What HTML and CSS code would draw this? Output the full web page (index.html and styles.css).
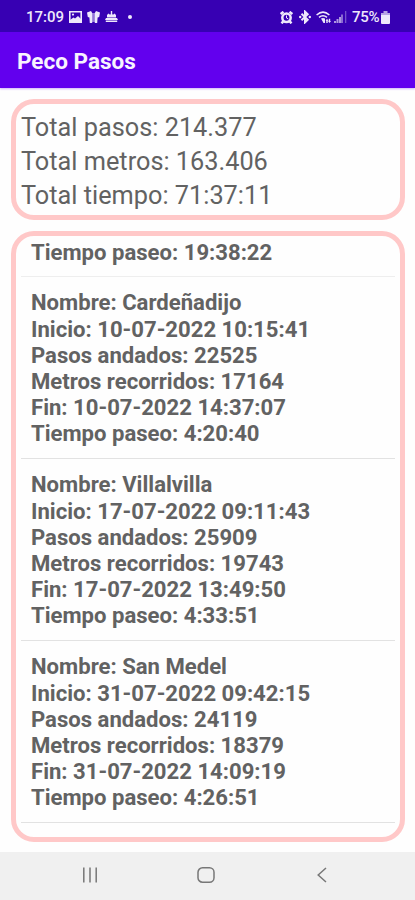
FILE: index.html
```html
<!DOCTYPE html>
<html lang="es">
<head>
    <meta charset="UTF-8">
    <meta name="viewport" content="width=device-width, initial-scale=1.0">
    <title>Peco Pasos</title>
    <link rel="stylesheet" href="styles.css">
</head>
<body>
    <div class="status-bar">
        <div class="status-left">
            <span class="clock">17:09</span>
            <svg class="icon-image" width="13" height="12" viewBox="0 0 13 12">
                <path fill="none" stroke="currentColor" stroke-width="1.6" d="M.8.8h11.4v10.4H.8z"/>
                <path fill="currentColor" d="M1 11V9l3.5-2.5L6 7.5 9 5l3 3v3z"/>
                <circle cx="4" cy="3.6" r="1.1" fill="currentColor"/>
            </svg>
            <svg class="icon-shirt" width="13" height="12" viewBox="0 0 13 12">
                <path fill="currentColor" d="M0 1.5L4 0l1.2 2v10H2.8L2.4 6.5.8 6zM13 1.5L9 0 7.8 2v10h2.4l.4-5.5 1.6-.5z"/>
                <path fill="currentColor" opacity=".5" d="M5 2h3v9H5z"/>
            </svg>
            <svg class="icon-cake" width="13" height="12" viewBox="0 0 13 12">
                <path fill="currentColor" d="M5.8 0h1.4v3H5.8zM2 4l1.500-1.500L5 3.800 6.500 2.500 8 3.800l1.500-1.300L11 4v2.500H2zM1 7h11l1 2H0zM.8 9.600h11.400V11H.8z"/>
            </svg>
            <span class="dot"></span>
        </div>
        <div class="status-right">
            <svg class="icon-alarm" width="13" height="13" viewBox="0 0 13 13">
                <circle cx="6.5" cy="6.8" r="4.2" fill="none" stroke="currentColor" stroke-width="2.5"/>
                <path fill="none" stroke="currentColor" stroke-width="2.4" d="M.6 3L3.5.8M12.4 3L9.500.8M1.500 12.4l2-2.300M11.500 12.400l-2-2.300"/>
                <path fill="none" stroke="currentColor" d="M6.5 4.5V7l1.8 1"/>
            </svg>
            <svg class="icon-bluetooth" width="12" height="14" viewBox="0 0 12 14">
                <path fill="none" stroke="currentColor" stroke-width="2" d="M2.5 3.8l6.200 6L6 12.4V1.600l2.700 2.600-6.200 6"/>
                <circle cx="1.2" cy="7" r="1.2" fill="currentColor"/>
                <circle cx="10.8" cy="7" r="1.2" fill="currentColor"/>
            </svg>
            <svg class="icon-wifi" width="16" height="13" viewBox="0 0 16 13">
                <path fill="none" stroke="currentColor" stroke-width="1.5" d="M.6 4Q7 -1.800 13.400 4M3 6.300q4-3.200 8 0"/>
                <path fill="currentColor" d="M5 7.5q2-1.200 4 0V12H7.500zM9.500 9.800L11 7.800l1.500 2h-.8V12h-1.400V9.800zM12 10h.8V7.800h1.400V10h.8l-1.500 2z"/>
            </svg>
            <svg class="icon-signal" width="13" height="12" viewBox="0 0 13 12">
                <path fill="currentColor" opacity=".65" d="M0 10h2v2H0zM2.5 8h2v4h-2zM5 6h2v6H5zM7.300 3.500h1.400V12H7.300z"/>
                <path fill="currentColor" opacity=".35" d="M11 0h1.300v12H11z"/>
            </svg>
            <span class="battery-level">75%</span>
            <svg class="icon-battery" width="9" height="13" viewBox="0 0 9 13">
                <path fill="currentColor" opacity=".7" d="M2.5 0h4v2H9v3H0V2h2.500z"/>
                <path fill="currentColor" d="M0 4h9v8a1 1 0 0 1-1 1H1a1 1 0 0 1-1-1z"/>
            </svg>
        </div>
    </div>

    <header class="app-bar">
        <h1>Peco Pasos</h1>
    </header>

    <main class="content">
        <section class="card totals">
            <p>Total pasos: 214.377</p>
            <p>Total metros: 163.406</p>
            <p>Total tiempo: 71:37:11</p>
        </section>

        <section class="card walks">
            <div class="walk">
                <p>Tiempo paseo: 19:38:22</p>
            </div>
            <div class="walk">
                <p>Nombre: Cardeñadijo</p>
                <p>Inicio: 10-07-2022 10:15:41</p>
                <p>Pasos andados: 22525</p>
                <p>Metros recorridos: 17164</p>
                <p>Fin: 10-07-2022 14:37:07</p>
                <p>Tiempo paseo: 4:20:40</p>
            </div>
            <div class="walk">
                <p>Nombre: Villalvilla</p>
                <p>Inicio: 17-07-2022 09:11:43</p>
                <p>Pasos andados: 25909</p>
                <p>Metros recorridos: 19743</p>
                <p>Fin: 17-07-2022 13:49:50</p>
                <p>Tiempo paseo: 4:33:51</p>
            </div>
            <div class="walk">
                <p>Nombre: San Medel</p>
                <p>Inicio: 31-07-2022 09:42:15</p>
                <p>Pasos andados: 24119</p>
                <p>Metros recorridos: 18379</p>
                <p>Fin: 31-07-2022 14:09:19</p>
                <p>Tiempo paseo: 4:26:51</p>
            </div>
        </section>
    </main>

    <nav class="nav-bar">
        <svg width="16" height="16" viewBox="0 0 16 16">
            <path fill="none" stroke="currentColor" stroke-width="1.5" d="M1.8.5v15M8 .5v15M14.2.5v15"/>
        </svg>
        <svg width="18" height="16" viewBox="0 0 18 16">
            <rect x="1" y=".8" width="16" height="14.4" rx="4.5" fill="none" stroke="currentColor" stroke-width="1.5"/>
        </svg>
        <svg width="16" height="16" viewBox="0 0 16 16">
            <path fill="none" stroke="currentColor" stroke-width="1.5" d="M12 1L4.2 8l7.8 7"/>
        </svg>
    </nav>
</body>
</html>
```
FILE: styles.css
```css
* {
    margin: 0;
    padding: 0;
    box-sizing: border-box;
    font-family: Roboto, sans-serif;
}

body {
    display: flex;
    flex-direction: column;
    height: 900px;
    background-color: #fefefe;
    color: #626262;
    overflow: hidden;
}

svg {
    display: block;
    flex-shrink: 0;
}

.status-bar {
    display: flex;
    justify-content: space-between;
    height: 32px;
    padding: 2px 25px 0 26px;
    background-color: #3700b3;
    color: #eee8fb;
}

.status-left,
.status-right {
    display: flex;
    align-items: center;
}

.clock {
    width: 43px;
    font-size: 15px;
    font-weight: 500;
}

.icon-shirt,
.icon-cake {
    margin-left: 5px;
}

.dot {
    width: 4px;
    height: 4px;
    margin-left: 10px;
    border-radius: 50%;
    background-color: #eee8fb;
}

.icon-bluetooth {
    margin-left: 6px;
}

.icon-wifi {
    margin-left: 5px;
}

.icon-signal {
    margin-left: 2px;
}

.battery-level {
    width: 29px;
    margin-left: 5px;
    font-size: 15px;
    font-weight: 500;
    letter-spacing: -0.3px;
}

.app-bar {
    display: flex;
    align-items: center;
    height: 56px;
    padding: 2px 17px 0;
    background-color: #6200ee;
    color: #f8f3ff;
    box-shadow: 0 1px 2px rgba(98, 0, 238, 0.3);
}

.app-bar h1 {
    font-size: 22.5px;
    font-weight: 700;
}

.content {
    flex: 1;
    display: flex;
    flex-direction: column;
    gap: 11px;
    padding: 11px 10px 10px 11px;
}

.card {
    border: 5px solid #ffc8c8;
    border-radius: 23px;
}

.totals {
    height: 121px;
    padding: 6.5px 5px;
    font-size: 25.3px;
    line-height: 34px;
}

.walks {
    flex: 1;
    padding: 3px 5px 0;
    font-size: 22.1px;
    font-weight: 700;
    line-height: 26.2px;
}

.walk {
    padding: 12.3px 10px 11.5px;
    border-bottom: 1px solid #e2e2e2;
}

/* the list is scrolled, only the end of the first walk is visible */
.walk:first-child {
    padding-top: 0;
    padding-bottom: 10.8px;
    border-bottom-color: #eee;
}

.nav-bar {
    display: flex;
    align-items: center;
    justify-content: space-between;
    height: 48px;
    padding: 0 85px 2px 82px;
    background-color: #f0f0f0;
    color: #777;
}
```
